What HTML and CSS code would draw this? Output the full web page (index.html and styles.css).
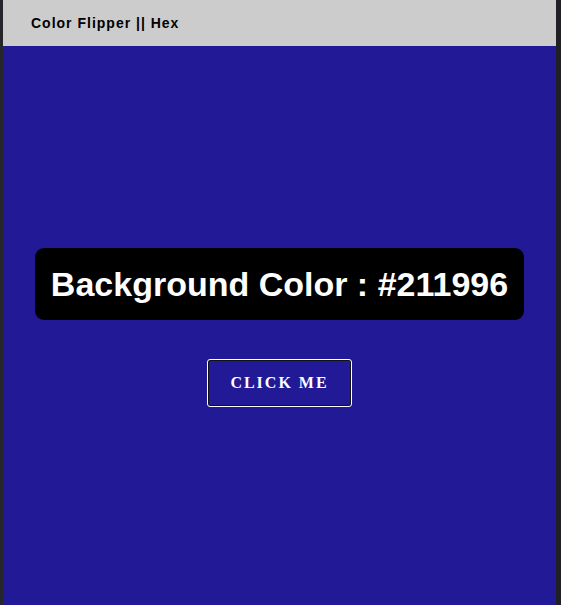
FILE: index.html
```html
<!DOCTYPE html>
<html>
<head>
<meta charset="utf-8">
<link rel="stylesheet" href="styles.css">
</head>
<body>
<div class="frame">
  <div class="gutter"></div>
  <div class="page">
    <header class="nav">Color Flipper || Hex</header>
    <main class="main">
      <h2 class="label">Background Color : <span class="code">#211996</span></h2>
      <button class="btn">Click me</button>
    </main>
  </div>
  <div class="scroll"></div>
</div>
</body>
</html>
```
FILE: styles.css
```css
* { box-sizing: border-box; }
html, body { margin: 0; padding: 0; height: 100%; }
body { background: #1e1e24; }
.frame { display: flex; height: 605px; }
.gutter { width: 3px; background: #25252b; }
.scroll { width: 5px; background: #1f1f26; }
.page { flex: 1; display: flex; flex-direction: column; background: #211996; }
.nav {
  height: 46px;
  background: #cccccc;
  display: flex;
  align-items: center;
  padding-left: 28px;
  font-family: "Liberation Sans", Arial, sans-serif;
  font-weight: bold;
  font-size: 14px;
  letter-spacing: 1px;
  color: #000;
}
.main {
  flex: 1;
  display: flex;
  flex-direction: column;
  align-items: center;
  padding-top: 202px;
  gap: 39px;
}
.label {
  margin: 0;
  height: 72px;
  width: 489px;
  display: flex;
  align-items: center;
  justify-content: center;
  background: #000;
  color: #fff;
  border-radius: 9px;
  font-family: "Liberation Sans", Arial, sans-serif;
  font-weight: bold;
  font-size: 34px;
  white-space: pre;
}
.btn {
  width: 145px;
  height: 48px;
  background: transparent;
  border: 1px solid #fff;
  border-radius: 3px;
  box-shadow: inset 0 0 0 1px #121212;
  color: #fff;
  font-family: "Liberation Serif", "Times New Roman", serif;
  font-weight: bold;
  font-size: 16px;
  letter-spacing: 2px;
  text-transform: uppercase;
  padding: 0;
}
```
